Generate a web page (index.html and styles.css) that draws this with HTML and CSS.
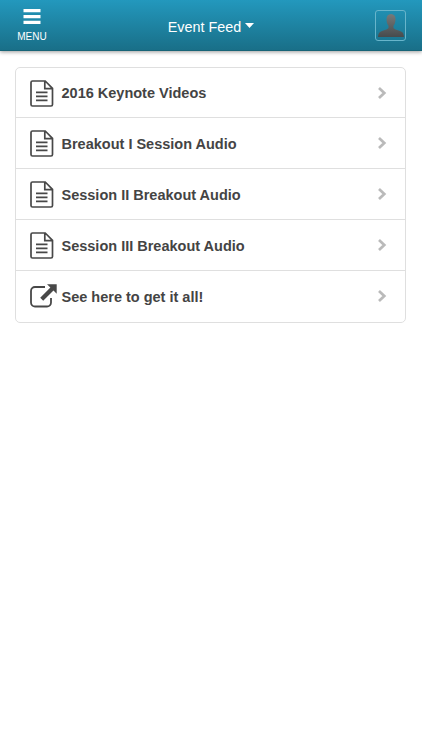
FILE: index.html
```
<!DOCTYPE html>
<html lang="en">
<head>
<meta charset="utf-8">
<title>Event Feed</title>
<link rel="stylesheet" href="styles.css">
</head>
<body>
<svg width="0" height="0" class="defs">
  <defs>
    <linearGradient id="person" x1="0" y1="0" x2="0" y2="1"><stop offset="0" stop-color="#777a7a"/><stop offset="1" stop-color="#474b4d"/></linearGradient>
    <symbol id="doc" viewBox="0 0 24 27"><path d="M2.500 1h12.700L22.500 8.300v16.200a1.500 1.500 0 0 1-1.500 1.500H2.500A1.500 1.500 0 0 1 1 24.500v-22A1.500 1.500 0 0 1 2.500 1zM14.800 1.500v7.200H22M6 12.300h11.500M6 16.300h11.500M6 20.300h11.500"/></symbol>
    <symbol id="chevron" viewBox="0 0 10 12"><path d="M2 1L7.300 6L2 11"/></symbol>
  </defs>
</svg>
<header class="bar">
  <button class="menu">
    <svg width="18" height="16" viewBox="0 0 18 16"><path fill="#fff" d="M.5 0h17v3.300H.5zM.5 5.900h17v3.300H.5zM.5 11.700h17V15H.5z"/></svg>
    <span>MENU</span>
  </button>
  <h1 class="title"><span>Event Feed</span><svg width="9" height="5" viewBox="0 0 9 5"><path fill="#fff" d="M0 0h9L4.500 5z"/></svg></h1>
  <div class="avatar">
    <svg width="26" height="23" viewBox="0 0 26 23"><path fill="url(#person)" d="M13 0c3 0 4.500 2.100 4.500 5.200 0 2.500-.7 5-2 6.600v2.300c1.500 1.800 5.200 2.200 8 3.600 1.700.9 2.300 2.500 2.500 5.300H0c.2-2.800.8-4.400 2.500-5.300 2.800-1.400 6.500-1.800 8-3.600v-2.300c-1.300-1.600-2-4.100-2-6.600C8.500 2.100 10 0 13 0z"/></svg>
  </div>
</header>
<main>
  <ul class="list">
    <li><svg class="icon"><use href="#doc"/></svg><span class="label">2016 Keynote Videos</span><svg class="chevron"><use href="#chevron"/></svg></li>
    <li><svg class="icon"><use href="#doc"/></svg><span class="label">Breakout I Session Audio</span><svg class="chevron"><use href="#chevron"/></svg></li>
    <li><svg class="icon"><use href="#doc"/></svg><span class="label">Session II Breakout Audio</span><svg class="chevron"><use href="#chevron"/></svg></li>
    <li><svg class="icon"><use href="#doc"/></svg><span class="label">Session III Breakout Audio</span><svg class="chevron"><use href="#chevron"/></svg></li>
    <li><svg class="link" viewBox="0 0 27 24"><path class="frame" d="M15 3H5a4 4 0 0 0-4 4v11.500a4 4 0 0 0 4 4h12a4 4 0 0 0 4-4V14"/><path class="arrow" d="M17 .3h9.700v9.400l-3.200-3.200L13.200 16.800l-3-3L20.400 3.600z"/></svg><span class="label">See here to get it all!</span><svg class="chevron"><use href="#chevron"/></svg></li>
  </ul>
</main>
</body>
</html>
```
FILE: styles.css
```
* { box-sizing: border-box; }
body {
  margin: 0;
  background: #fff;
  font-family: "Liberation Sans", Arial, sans-serif;
  color: #444;
}
svg { display: block; flex: none; }
.defs { position: absolute; }
.bar {
  display: grid;
  grid-template-columns: 64px 1fr 64px;
  height: 51px;
  background: linear-gradient(#2398bd, #196f88);
  border-bottom: 1px solid #176477;
  box-shadow: 0 1px 4px rgba(0, 0, 0, .4);
  color: #fff;
}
.menu {
  display: flex;
  flex-direction: column;
  align-items: center;
  gap: 6px;
  padding: 9px 0 0;
  border: 0;
  background: none;
  color: #fff;
  font: 10px/12px "Liberation Sans", Arial, sans-serif;
}
.title {
  display: flex;
  align-items: center;
  justify-content: center;
  gap: 4px;
  margin: 0;
  padding-top: 3px;
  font-size: 14.400px;
  font-weight: 400;
}
.title svg { margin-top: -3px; }
.avatar {
  display: flex;
  align-items: flex-end;
  justify-content: center;
  width: 31px;
  height: 31px;
  margin: 10px 0 0 17px;
  padding-bottom: 3px;
  border: 1px solid #68b5cb;
  border-radius: 3px;
}
main { padding: 16px 16px 0 15px; }
.list {
  margin: 0;
  padding: 0;
  list-style: none;
  border: 1px solid #dfdfdf;
  border-radius: 5px;
}
.list li {
  display: flex;
  align-items: center;
  height: 51px;
  padding: 1px 18px 0 14px;
  border-bottom: 1px solid #dfdfdf;
}
.list li:first-child { height: 50px; }
.list li:last-child { padding-bottom: 1px; border-bottom: 0; }
.icon { width: 24px; height: 27px; margin-right: 7.500px; fill: none; stroke: #484848; stroke-width: 1.700; }
.link { width: 27px; height: 24px; margin: -2px 4.500px 0 0; }
.frame { fill: none; stroke: #484848; stroke-width: 1.800; }
.arrow { fill: #484848; }
.label { flex: 1; padding-top: 2px; font-size: 14.500px; line-height: 17px; font-weight: 700; white-space: nowrap; }
.list li:first-child .label { margin-top: -1px; }
.chevron { width: 10px; height: 12px; margin-top: -1px; fill: none; stroke: #bababa; stroke-width: 2.700; }
```
